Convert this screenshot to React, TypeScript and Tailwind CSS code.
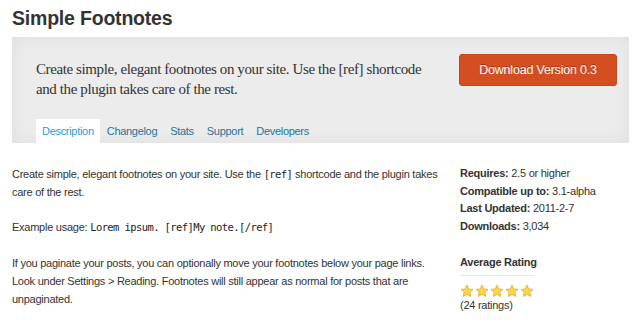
import React from 'react';

const tabs = ['Description', 'Changelog', 'Stats', 'Support', 'Developers'];

function Star() {
  return (
    <svg width="14" height="14" viewBox="0 0 24 24">
      <path
        d="M12 1.8l3.1 6.6 7.2.9-5.3 5 1.4 7.1L12 17.9l-6.4 3.5L7 14.3l-5.3-5 7.2-.9z"
        fill="#f9d647"
        stroke="#d9a92a"
        strokeWidth="1.3"
        strokeLinejoin="round"
      />
    </svg>
  );
}

export default function App() {
  return (
    <div className="w-[640px] h-[320px] overflow-hidden bg-white text-[#333] font-['Liberation_Sans',Arial,sans-serif]">
      <h1 className="pl-3 pt-[5px] text-[19.5px] leading-[26px] font-bold tracking-[-0.2px] text-[#333]">Simple Footnotes</h1>

      {/* header box */}
      <div className="mx-3 mt-[6px] w-[617px] h-[106px] bg-[#ececec] shadow-[inset_0_0_18px_rgba(0,0,0,0.06)] flex flex-col">
        <div className="flex justify-between pl-6 pr-3 pt-[17px]">
          <p className="font-['Liberation_Serif',Georgia,serif] text-[15px] leading-[20px] tracking-[-0.4px] text-[#333] w-[400px] mt-[5px]">
            Create simple, elegant footnotes on your site. Use the [ref] shortcode and the plugin takes care of the rest.
          </p>
          <button className="w-[158px] h-[32px] rounded-[3px] bg-[#d54e21] border border-[#c4461c] text-white text-[12.5px] tracking-[-0.2px] [text-shadow:0_-1px_0_rgba(0,0,0,0.3)]">
            Download Version 0.3
          </button>
        </div>
        <div className="mt-auto flex pl-6 text-[11px] tracking-[-0.3px]">
          {tabs.map((t, i) => (
            <div
              key={t}
              className={
                i === 0
                  ? 'h-[24px] px-[6px] mr-[1px] flex items-center bg-white text-[#21a0df]'
                  : 'h-[24px] px-[6px] mr-[1px] flex items-center text-[#21759b]'
              }
            >
              {t}
            </div>
          ))}
        </div>
      </div>

      {/* body */}
      <div className="flex pl-3 pt-[22px] text-[11px] leading-[18px] tracking-[-0.25px]">
        <div className="w-[430px]">
          <p>
            Create simple, elegant footnotes on your site. Use the{' '}
            <code className="font-['DejaVu_Sans_Mono',monospace] text-[10.5px] tracking-[-0.6px] text-[#222]">[ref]</code> shortcode and the plugin takes care of the rest.
          </p>
          <p className="mt-[17px]">
            Example usage:{' '}
            <code className="font-['DejaVu_Sans_Mono',monospace] text-[10.5px] tracking-[-0.6px] text-[#222]">Lorem ipsum. [ref]My note.[/ref]</code>
          </p>
          <p className="mt-[18px]">
            If you paginate your posts, you can optionally move your footnotes below your page links. Look under Settings &gt; Reading. Footnotes will still appear as normal for posts that are unpaginated.
          </p>
        </div>
        <div className="ml-[18px] w-[170px] leading-[17.5px]">
          <p><b>Requires:</b> 2.5 or higher</p>
          <p><b>Compatible up to:</b> 3.1-alpha</p>
          <p><b>Last Updated:</b> 2011-2-7</p>
          <p><b>Downloads:</b> 3,034</p>
          <p className="mt-[19px] font-bold pb-[3px] border-b border-[#e5e5e5] w-[74px] whitespace-nowrap">Average Rating</p>
          <div className="flex gap-[1px] mt-[8px]">
            <Star />
            <Star />
            <Star />
            <Star />
            <Star />
          </div>
          <p className="leading-[15px]">(24 ratings)</p>
        </div>
      </div>
    </div>
  );
}
